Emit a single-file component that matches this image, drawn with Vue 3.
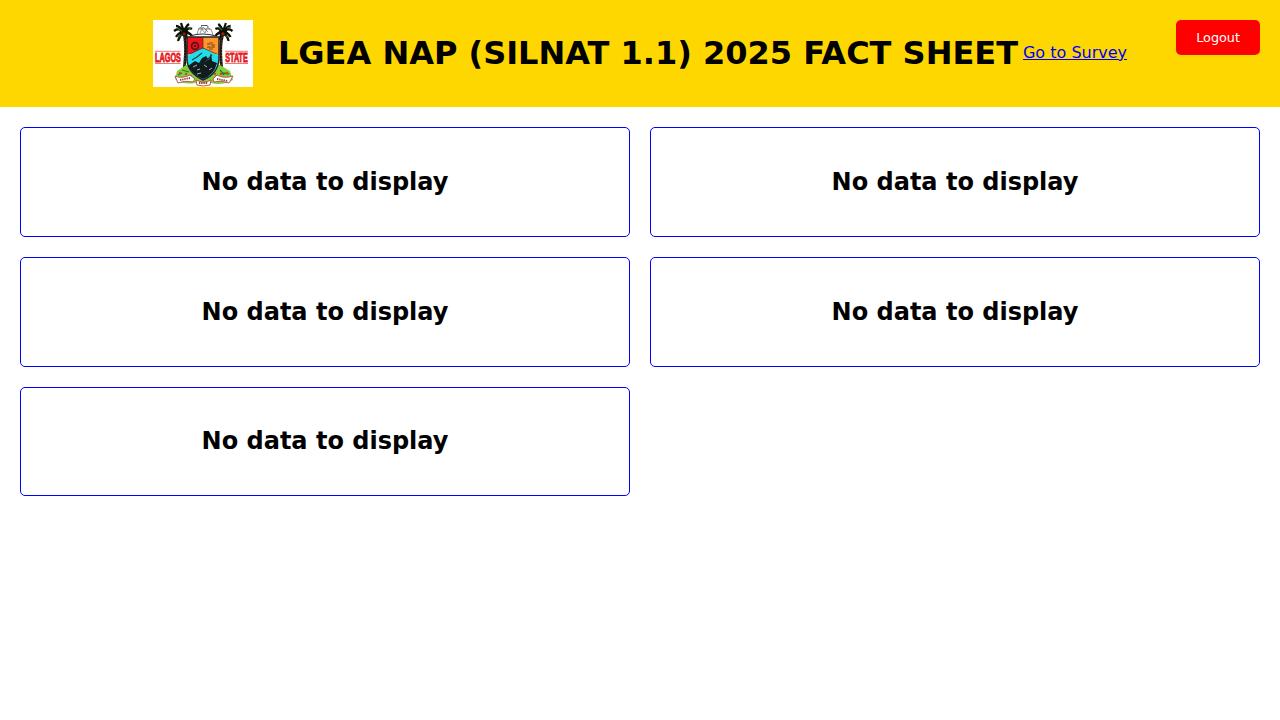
<script setup>
const cards = Array.from({ length: 5 }, () => 'No data to display')
const fronds = [
  'M0 0Q-5-5-10-1', 'M0 0Q-5 0-8 5', 'M0 0Q-4 3-6 9', 'M0 0Q-4-6-8-6',
  'M0 0Q-2-6-3-9', 'M0 0Q2-6 5-8', 'M0 0Q5-5 8-3', 'M0 0Q5 0 8 4', 'M0 0Q3 4 4 8'
]
</script>

<template>
  <div class="page">
    <header class="header">
      <svg class="logo" viewBox="0 0 100 67" role="img" aria-label="Lagos State">
        <rect width="100" height="67" fill="#fff" />
        <path d="M2 31.3h25.5M72 31.3h23M2 43.5h25.5M72 43.5h23" stroke="#e66" stroke-width=".9" />
        <g class="word">
          <text transform="translate(2 41.7) scale(.61 1)">LAGOS</text>
          <text transform="translate(72.3 41.7) scale(.6 1)">STATE</text>
        </g>

        <path d="M31 14Q34 25 31 51M70 14Q66 25 69 51" fill="none" stroke="#211a12" stroke-width="2.8" />
        <path d="M31 17l1 31M69 17l-1 31" stroke="#806838" stroke-width=".7" stroke-dasharray="1 2" />
        <g fill="none" stroke="#101009" stroke-width="2.3">
          <g transform="translate(31 12)"><circle r="3.2" fill="#101009" /><path v-for="d in fronds" :key="d" :d="d" /></g>
          <g transform="translate(70 12) scale(-.95 1)"><circle r="3.2" fill="#101009" /><path v-for="d in fronds" :key="d" :d="d" /></g>
        </g>
        <path d="M24 8l5 3M34 7l4 2M65 7l4 3M74 8l4-1M25 17l4-2M72 16l4 1" stroke="#257324" stroke-width="1.1" />
        <circle cx="31" cy="14" r="1.7" fill="#702016" />
        <circle cx="70" cy="14" r="1.7" fill="#932016" />

        <path d="M44 14l2-6h2l1-3M54 5l2 4h2l2 6M45 9h12M47 7l5 6 3-7M47 13l3-6 5 5" fill="none" stroke="#777" stroke-width=".8" />
        <path d="M48 5.5h6" stroke="#555" stroke-width="1" />
        <path d="M37 16q12-4 26 0" fill="none" stroke="#333" stroke-width="1.1" />

        <path d="M24 51L33 45h34l10 6 3 9q-10 6-22 3H42q-13 2-20-4z" fill="#80d13b" />
        <path d="M34 17h16v17H34z" fill="#f3151d" />
        <path d="M50 17h16v17H50z" fill="#ff962c" />
        <path d="M34 36l16-8 16 8v4Q64 55 50 60 36 54 34 40z" fill="#24dce9" />
        <path d="M34 17h32v22Q65 54 50 60 35 53 34 40z" fill="none" stroke="#292526" stroke-width="1.5" />
        <path d="M34 35l16-7 16 7M50 17v12" fill="none" stroke="#3c302b" stroke-width=".7" />
        <circle cx="42" cy="26" r="3.4" fill="#f3151d" stroke="#51151a" stroke-width="1.7" />
        <circle cx="42" cy="26" r="1.1" fill="#401015" />
        <path d="M54 24h3v-2M59 22v3h3M54 27h3v3M59 30v-3h3" fill="none" stroke="#a05d20" stroke-width="1.3" />
        <path d="M35 46l7-5 4 2 3-5 4-2 3 4 2-7 1 8 5 2Q61 55 50 59 40 55 35 46z" fill="#111c1e" />
        <path d="M40 47l4-2M44 50l3-1M51 45l3 2M56 50l3-2M44 54l4-1" stroke="#b9c9ca" stroke-width=".9" />
        <path d="M39 40l5-3 5-4M52 42l7-7" fill="none" stroke="#173d43" stroke-width="1.1" />

        <path d="M29 50l7 2M67 50l4 5M25 55l4-2M70 53l6 1" stroke="#287b2c" stroke-width="1.3" />
        <g fill="#e13c36">
          <circle cx="27" cy="53" r="1.2" /><circle cx="33" cy="54" r="1.3" />
          <circle cx="38" cy="56" r="1" /><circle cx="62" cy="54" r="1.2" />
          <circle cx="68" cy="54" r="1.3" /><circle cx="74" cy="53" r="1.2" />
        </g>
        <path d="M22 56q7 3 15-1l5 4-2 3q-8-2-15 1zM60 59l4-4q7 4 16 1l-4 7q-8-3-15-1zM43 60q8 4 15 0l-1 5q-7 2-13 0z" fill="#fff" stroke="#b74540" stroke-width=".9" />
        <path d="M27 60l10-2M46 63h9M64 59l11 2" stroke="#963d41" stroke-width="1.8" stroke-dasharray="1.4 .8" />
      </svg>
      <h1>LGEA NAP (SILNAT 1.1) 2025 FACT SHEET</h1>
      <a href="#">Go to Survey</a>
      <button class="logout" type="button">Logout</button>
    </header>
    <main class="grid">
      <section v-for="(message, i) in cards" :key="i" class="card">
        <h2>{{ message }}</h2>
      </section>
    </main>
  </div>
</template>

<style scoped>
.page {
  font-family: "DejaVu Sans", sans-serif;
  font-size: 16px;
  color: #000;
}
.header {
  position: relative;
  box-sizing: border-box;
  height: 106.9px;
  padding: 20px;
  display: flex;
  align-items: center;
  justify-content: center;
  background: #ffd700;
}
.logo {
  flex: none;
  width: 100px;
  height: 67px;
  margin-right: 25px;
}
.word {
  fill: #e51c23;
  font: bold 12px "Liberation Sans", sans-serif;
  stroke: #e51c23;
  stroke-width: .8px;
}
h1 {
  margin: 0 5px 0 0;
  font-size: 32px;
  line-height: 38px;
  white-space: nowrap;
}
a {
  margin-bottom: 2px;
  color: #0000ee;
  white-space: nowrap;
}
.logout {
  position: absolute;
  top: 20px;
  right: 20px;
  padding: 10px 20px;
  border: 0;
  border-radius: 5px;
  background: #f00;
  color: #fff;
  font: 12.8px "DejaVu Sans", sans-serif;
}
.grid {
  display: grid;
  grid-template-columns: 1fr 1fr;
  gap: 20px;
  padding: 20px;
}
.card {
  padding: 20px;
  border: 1px solid #00f;
  border-radius: 5px;
  text-align: center;
}
h2 {
  margin: 19.92px 0;
  font-size: 24px;
  line-height: 28px;
}
</style>

<style>
body {
  background: #fff;
}
</style>
